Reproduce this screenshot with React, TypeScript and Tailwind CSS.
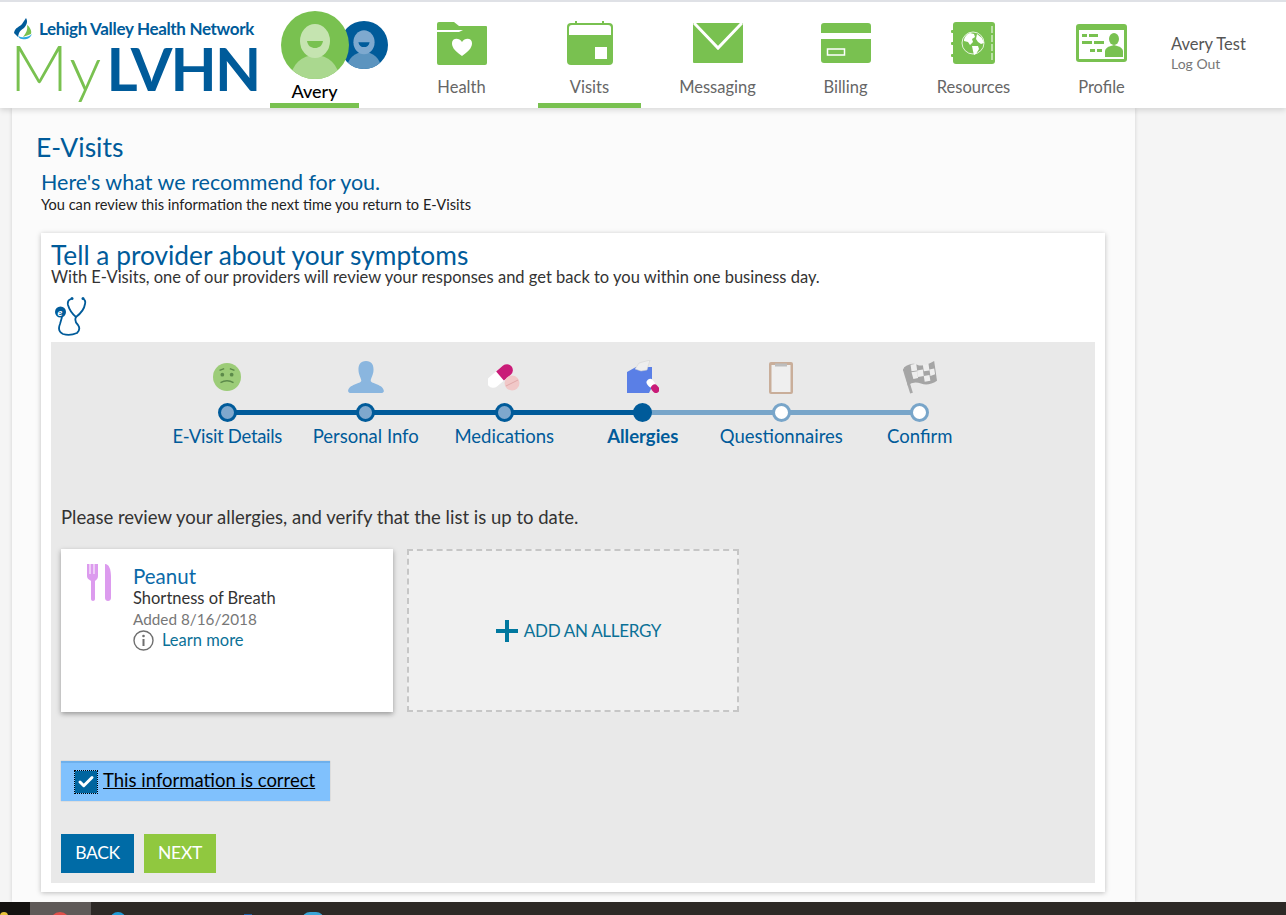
import React from "react";
import { Check } from "lucide-react";

const green = "#79c150";

function FolderIcon() {
  return (
    <svg width="52" height="44" viewBox="0 0 52 44">
      <path d="M1 3q0-2 2-2h15l5 4h27q1 0 1 1v3H1z" fill={green} />
      <path d="M1 11h22l4-2h24v33q0 2-2 2H3q-2 0-2-2z" fill={green} />
      <path d="M26 35c-9-6-10-10-10-13 0-5 7-6 10-1 3-5 10-4 10 1 0 3-1 7-10 13z" fill="#fff" />
    </svg>
  );
}

function CalendarIcon() {
  return (
    <svg width="46" height="44" viewBox="0 0 46 44">
      <rect x="0" y="2" width="46" height="42" rx="4" fill={green} />
      <rect x="8" y="0" width="2" height="5" fill={green} />
      <rect x="35" y="0" width="2" height="5" fill={green} />
      <path d="M2 14V7q0-3 3-3h36q3 0 3 3v7z" fill="#fff" />
      <rect x="28" y="26" width="12" height="12" fill="#fff" />
    </svg>
  );
}

function EnvelopeIcon() {
  return (
    <svg width="50" height="40" viewBox="0 0 50 40">
      <rect width="50" height="40" rx="1" fill={green} />
      <path d="M1 0l24 25L49 0" fill="none" stroke="#fff" strokeWidth="3" />
    </svg>
  );
}

function CardIcon() {
  return (
    <svg width="50" height="40" viewBox="0 0 50 40">
      <path d="M0 3q0-3 3-3h44q3 0 3 3v7H0zM0 16h50v21q0 3-3 3H3q-3 0-3-3z" fill={green} />
      <rect x="6.500" y="26" width="17" height="6" fill="none" stroke="#fff" strokeWidth="1.500" />
    </svg>
  );
}

function BookIcon() {
  return (
    <svg width="45" height="42" viewBox="0 0 45 42">
      <rect x="2" y="0" width="42" height="42" rx="3" fill={green} />
      <rect x="0" y="8" width="4" height="3" rx="1" fill={green} />
      <rect x="0" y="20" width="4" height="3" rx="1" fill={green} />
      <rect x="0" y="32" width="4" height="3" rx="1" fill={green} />
      <path d="M41 4v34" stroke="#fff" strokeWidth="1" strokeDasharray="7 2" />
      <circle cx="22" cy="21" r="11" fill="none" stroke="#fff" strokeWidth="0.800" />
      <path d="M19 11l4 1 1 3-3 2 1 3-3 3-2-3-4-1c0-4 3-7 6-8zM26 12l5 4 2 5-3 1-3-2-2-3zM21 24l6 0 1 3-3 5-2 1-1-4z" fill="#fff" />
    </svg>
  );
}

function IdCardIcon() {
  return (
    <svg width="51" height="38" viewBox="0 0 51 38">
      <rect x="0" y="0" width="51" height="38" rx="3" fill={green} />
      <rect x="3" y="6" width="45" height="29" fill="#fff" />
      <rect x="6" y="10" width="5" height="3" fill={green} />
      <rect x="13" y="10" width="9" height="3" fill={green} />
      <rect x="6" y="17" width="10" height="3" fill={green} />
      <rect x="18" y="17" width="10" height="3" fill={green} />
      <rect x="14" y="25" width="5" height="3" fill={green} />
      <rect x="21" y="25" width="5" height="3" fill={green} />
      <ellipse cx="38" cy="15" rx="5" ry="6" fill={green} />
      <path d="M29 33v-6q0-4 9-6 9 2 9 6v6z" fill={green} />
    </svg>
  );
}

function Avatar({ id, size, bg, head, body, className }: { id: string; size: string; bg: string; head: string; body: string; className?: string }) {
  return (
    <svg className={size + " " + (className ?? "")} viewBox="0 0 68 68">
      <clipPath id={id}><circle cx="34" cy="34" r="34" /></clipPath>
      <circle cx="34" cy="34" r="34" fill={bg} />
      <g clipPath={"url(#" + id + ")"}>
        <ellipse cx="34" cy="67" rx="24" ry="23" fill={body} />
        <ellipse cx="34" cy="30" rx="15" ry="17" fill={head} />
        <path d="M26 30h16c-1 5-4 7-8 7s-7-2-8-7z" fill={bg} />
      </g>
    </svg>
  );
}

function Stethoscope() {
  return (
    <svg width="32" height="39" viewBox="0 0 32 39" fill="none" stroke="#005b9a" strokeWidth="1.800">
      <path d="M16 2Q12 3 13 8Q15 15 21 20Q29 14 30 7Q31 3 28 2" />
      <path d="M21 20Q19 24 23 28Q26 32 22 36Q15 39 8 37Q2 34 5 27L7 20" />
      <circle cx="17" cy="1.500" r="1.500" fill="#005b9a" stroke="none" />
      <circle cx="28" cy="1.500" r="1.500" fill="#005b9a" stroke="none" />
      <circle cx="5.500" cy="15" r="5.500" fill="#005b9a" stroke="none" />
      <text x="2.500" y="18.500" fontSize="10" fontStyle="italic" fontWeight="700" fill="#fff" stroke="none">e</text>
    </svg>
  );
}

function SadFace() {
  return (
    <svg width="28" height="28" viewBox="0 0 30 30" className="mb-[3px]">
      <circle cx="15" cy="15" r="15" fill="#9ccc78" />
      <circle cx="10" cy="12.500" r="2" fill="#5c8a4a" />
      <circle cx="20" cy="12.500" r="2" fill="#5c8a4a" />
      <path d="M7 8l5-2M23 8l-5-2M8 21q7-4 14 0" fill="none" stroke="#5c8a4a" strokeWidth="1.500" />
    </svg>
  );
}

function Person() {
  return (
    <svg width="36" height="32" viewBox="0 0 38 34" className="mb-[1px]">
      <path d="M19 0c6 0 8 4 8 9 0 6-3 9-3 12 0 3 14 4 14 11 0 1-1 2-2 2H2c-1 0-2-1-2-2 0-7 14-8 14-11 0-3-3-6-3-12 0-5 2-9 8-9z" fill="#8ab6df" />
    </svg>
  );
}

function Pills() {
  return (
    <svg width="33" height="28" viewBox="0 0 33 28" className="mb-[3px]">
      <g transform="rotate(-40 12 13)">
        <rect x="-3" y="7" width="30" height="12" rx="6" fill="#fff" />
        <path d="M12 7h9a6 6 0 0 1 0 12h-9z" fill="#c91c78" />
      </g>
      <circle cx="24" cy="20" r="7.500" fill="#f1c8c8" />
      <path d="M18 23l12-6" stroke="#e0a8a8" strokeWidth="1" />
    </svg>
  );
}

function TissueBox() {
  return (
    <svg width="32" height="33" viewBox="0 0 32 33" className="mb-[1px]">
      <path d="M0 12l9-5h16v20l-3 6H0z" fill="#5a7fe6" />
      <path d="M8 9L12 3l11-3-3 10-6 1z" fill="#eeeeee" stroke="#cfcfcf" strokeWidth=".5" />
      <g transform="rotate(50 26 26)">
        <rect x="18" y="22.500" width="9" height="7" rx="3.500" fill="#fff" />
        <rect x="25" y="22.500" width="9" height="7" rx="3.500" fill="#c91c78" />
      </g>
    </svg>
  );
}

function Clipboard() {
  return (
    <svg width="24" height="32" viewBox="0 0 24 32">
      <rect width="24" height="32" rx="2" fill="#c9ae9a" />
      <rect x="2.500" y="3" width="19" height="27" fill="#efefef" />
      <rect x="6" y="1.500" width="12" height="3" fill="#bdbdbd" />
    </svg>
  );
}

function CheckeredFlag() {
  return (
    <svg width="34" height="34" viewBox="0 0 36 36">
      <path d="M9 35L1 9" stroke="#a8a8a8" strokeWidth="3" />
      <path d="M1 8q8-6 14-3t18-4l3 21q-9 6-17 3t-14 2z" fill="#a5a5a5" />
      <path d="M8 5l6-1 1 7-6 1zM21 5l6-1 1 7-6 1zM15 11l6-1 1 7-6 1zM28 10l5-1 1 6-5 2zM9 13l6-1 1 7-5 1zM22 17l6-1 1 6-6 1z" fill="#eeeeee" />
    </svg>
  );
}

function Fork() {
  return (
    <svg width="24" height="37" viewBox="0 0 24 37" fill="#dc9bee">
      <path d="M0 0h2.500v10h1V0h3v10h1V0H11v12c0 3-2 4-3 5v18c0 2.500-4 2.500-4 0V17c-1-1-4-2-4-5z" />
      <path d="M18 0c4 0 6 5 6 14v20c0 4-6 4-6 0z" />
    </svg>
  );
}

function InfoCircle() {
  return (
    <svg width="21" height="21" viewBox="0 0 21 21" fill="none">
      <circle cx="10.500" cy="10.500" r="9.500" stroke="#6f6f6f" strokeWidth="1.400" />
      <circle cx="10.500" cy="6" r="1.300" fill="#6f6f6f" />
      <rect x="9.500" y="9" width="2" height="7" fill="#6f6f6f" />
    </svg>
  );
}

function PlusMark() {
  return (
    <svg width="22" height="22" viewBox="0 0 22 22" fill="#00789f">
      <rect x="0" y="9" width="22" height="4" />
      <rect x="9" y="0" width="4" height="22" />
    </svg>
  );
}

const navItems = [
  { label: "Health", icon: <FolderIcon />, active: false },
  { label: "Visits", icon: <CalendarIcon />, active: true },
  { label: "Messaging", icon: <EnvelopeIcon />, active: false },
  { label: "Billing", icon: <CardIcon />, active: false },
  { label: "Resources", icon: <BookIcon />, active: false },
  { label: "Profile", icon: <IdCardIcon />, active: false },
];

const steps = [
  { label: "E-Visit Details", icon: <SadFace />, state: "done" },
  { label: "Personal Info", icon: <Person />, state: "done" },
  { label: "Medications", icon: <Pills />, state: "done" },
  { label: "Allergies", icon: <TissueBox />, state: "current" },
  { label: "Questionnaires", icon: <Clipboard />, state: "todo" },
  { label: "Confirm", icon: <CheckeredFlag />, state: "todo" },
];

export default function App() {
  return (
    <div className="h-[915px] overflow-hidden bg-[#f5f5f5] flex flex-col font-['Lato',sans-serif]">
      <header className="h-[108px] shrink-0 bg-white border-t-2 border-[#dfe1e6] shadow-[0_2px_6px_rgba(0,0,0,0.15)] flex relative z-10">
        <div className="w-[270px] shrink-0 pl-[14px] pt-[15px]">
          <div className="flex items-center gap-[5px] h-[24px]">
            <svg width="20" height="22" viewBox="0 0 20 22" className="shrink-0">
              <path d="M0 15C1 9 6 9 8 6l4-6c2 3 1 7-2 10-3 2-5 3-6 9z" fill="#005b9a" />
              <path d="M13 7c3 2 5 6 4 9l-8 3c3-4 5-7 4-12z" fill="#79c150" />
              <path d="M4 18c4 2 10 2 14-2-2 5-7 6-10 5-2 0-3-1-4-3z" fill="#29a9e0" />
            </svg>
            <span className="text-[17px] leading-[22px] font-bold text-[#005b9a] tracking-[-0.33px] whitespace-nowrap">Lehigh Valley Health Network</span>
          </div>
          <div className="flex items-baseline h-[44px] mt-[4px] ml-[-4px] leading-[44px] whitespace-nowrap">
            <span className="text-[64px] text-[#79c150] font-light tracking-[2px]">My</span>
            <span className="text-[60px] text-[#005b9a] font-bold ml-[3px] tracking-[-1.800px]">LVHN</span>
          </div>
        </div>

        <div className="w-[89px] shrink-0 flex flex-col items-start border-b-[5px] border-[#79c150]">
          <div className="relative h-[68px] w-[107px] mt-[9px] ml-[11px] shrink-0">
            <Avatar id="avatar-small" size="w-[48px] h-[48px]" bg="#005b9a" head="#7ea9cf" body="#5c94bf" className="absolute left-[59px] top-[10px]" />
            <Avatar id="avatar-main" size="w-[68px] h-[68px]" bg="#79c150" head="#c5e4b0" body="#aad88f" className="absolute left-0 top-0" />
          </div>
          <span className="self-center text-[18px] font-medium text-black mt-[2px] leading-[20px]">Avery</span>
        </div>

        <nav className="flex ml-[51px]">
          {navItems.map((item) => (
            <div
              key={item.label}
              className={
                "w-[103px] mr-[25px] flex flex-col items-center border-b-[5px] " +
                (item.active ? "border-[#79c150]" : "border-transparent")
              }
            >
              <div className="h-[44px] mt-[19px] flex items-center justify-center">{item.icon}</div>
              <span className="text-[16.500px] text-[#666] mt-[11px] leading-[22px]">{item.label}</span>
            </div>
          ))}
        </nav>

        <div className="ml-[-7px] pt-[32px]">
          <div className="text-[16.500px] text-[#555] leading-[20px]">Avery Test</div>
          <div className="text-[14px] text-[#777] leading-[20px]">Log Out</div>
        </div>
      </header>

      <div className="flex-1 min-h-0 pl-[12px]">
        <main className="w-[1123px] h-full bg-[#fbfbfb] shadow-[0_0_4px_rgba(0,0,0,0.15)] pl-[24px] pt-[23px]">
          <h1 className="text-[26.500px] leading-[32px] text-[#005b9a]">E-Visits</h1>
          <div className="pl-[5px] mt-[7px]">
            <h2 className="text-[21.500px] leading-[24px] text-[#005b9a]">Here's what we recommend for you.</h2>
            <p className="text-[14.600px] leading-[20px] text-[#222] mt-[1px]">You can review this information the next time you return to E-Visits</p>
          </div>

          <section className="mt-[18px] w-[1064px] ml-[5px] bg-white shadow-[0_1px_5px_rgba(0,0,0,0.25)] px-[10px] pt-[9px] pb-[9px]">
            <h3 className="text-[26.300px] leading-[26px] text-[#005b9a]">Tell a provider about your symptoms</h3>
            <p className="text-[16.500px] leading-[18px] text-[#333]">With E-Visits, one of our providers will review your responses and get back to you within one business day.</p>
            <div className="h-[56px] pt-[11px] pl-[4px]"><Stethoscope /></div>

            <div className="bg-[#e9e9e9] h-[541px] pl-[10px] pt-[17px]">
              <div className="relative ml-[97px] w-[831px]">
                <div className="absolute left-[69px] top-[51px] w-[415px] h-[5px] bg-[#005b9a]" />
                <div className="absolute left-[484px] top-[51px] w-[277px] h-[5px] bg-[#78a5c9]" />
                <div className="flex">
                  {steps.map((s, i) => (
                    <div key={s.label} className="w-[138.500px] flex flex-col items-center relative">
                      <div className="h-[35px] flex items-end justify-center">{s.icon}</div>
                      <div
                        className={
                          "mt-[9px] w-[19px] h-[19px] rounded-full border-[3px] " +
                          (s.state === "done"
                            ? "bg-[#7fa8cd] border-[#005b9a]"
                            : s.state === "current"
                            ? "bg-[#005b9a] border-[#005b9a]"
                            : "bg-white border-[#78a5c9]")
                        }
                      />
                      <span
                        className={
                          "mt-[2px] text-[18.500px] leading-[24px] text-[#005b9a] whitespace-nowrap " +
                          (s.state === "current" ? "font-bold " : "") +
                          (i === 0 ? "tracking-[-0.3px]" : "")
                        }
                      >
                        {s.label}
                      </span>
                    </div>
                  ))}
                </div>
              </div>

              <p className="mt-[57px] text-[18.500px] leading-[24px] text-[#333]">Please review your allergies, and verify that the list is up to date.</p>

              <div className="flex gap-[14px] mt-[20px]">
                <div className="w-[332px] h-[163px] bg-white shadow-[0_2px_5px_rgba(0,0,0,0.35)] flex pl-[26px] pt-[15px]">
                  <div className="w-[46px] shrink-0"><Fork /></div>
                  <div>
                    <div className="text-[20.500px] leading-[24px] text-[#0a6aa8]">Peanut</div>
                    <div className="text-[16.500px] leading-[20px] text-[#333]">Shortness of Breath</div>
                    <div className="text-[15.300px] leading-[22px] text-[#777]">Added 8/16/2018</div>
                    <div className="flex items-center gap-[8px] h-[20px]">
                      <InfoCircle />
                      <span className="text-[16.500px] text-[#0b7197]">Learn more</span>
                    </div>
                  </div>
                </div>
                <div className="w-[332px] h-[163px] bg-[#f0f0f0] border-2 border-dashed border-[#c6c6c6] flex items-center justify-center gap-[6px] pl-[11px] pt-[1px]">
                  <PlusMark />
                  <span className="text-[17px] text-[#0b7197] tracking-[-0.3px]">ADD AN ALLERGY</span>
                </div>
              </div>

              <div className="mt-[49px] w-[269px] h-[40px] bg-[#80c1fd] border-t-2 border-[#6eb0ec] shadow-[0_0_1px_rgba(0,0,0,0.3)] flex items-center pl-[14px] gap-[6px]">
                <span className="w-[22px] h-[22px] bg-[#00659f] flex items-center justify-center outline-1 outline-dotted outline-black">
                  <Check className="w-[18px] h-[18px] text-white" strokeWidth={4} />
                </span>
                <span className="text-[18.500px] text-black underline mb-[2px]">This information is correct</span>
              </div>

              <div className="flex gap-[10px] mt-[33px]">
                <button className="w-[73px] h-[39px] bg-[#006ba6] text-white text-[17.500px] tracking-[-0.3px]">BACK</button>
                <button className="w-[72px] h-[39px] bg-[#90c83f] text-white text-[17.500px] tracking-[-0.3px]">NEXT</button>
              </div>
            </div>
          </section>
        </main>
      </div>

      <footer className="h-[13px] shrink-0 bg-[#2d2926] flex overflow-hidden">
        <div className="w-[30px] bg-[#141210] relative">
          <span className="block mt-[10px] w-[8px] h-[8px] rounded-full bg-[#e8c33a]" />
        </div>
        <div className="w-[61px] bg-[#5f5a58]">
          <span className="block ml-[20px] mt-[10px] w-[20px] h-[20px] rounded-full bg-[#e1504a]" />
        </div>
        <span className="ml-[19px] mt-[10px] w-[16px] h-[16px] rounded-full bg-[#1e9ad6]" />
        <span className="ml-[118px] mt-[12px] w-[8px] h-[8px] bg-[#1f5fa8]" />
        <span className="ml-[50px] mt-[10px] w-[22px] h-[16px] rounded-full bg-[#3aa6d8]" />
      </footer>
    </div>
  );
}
